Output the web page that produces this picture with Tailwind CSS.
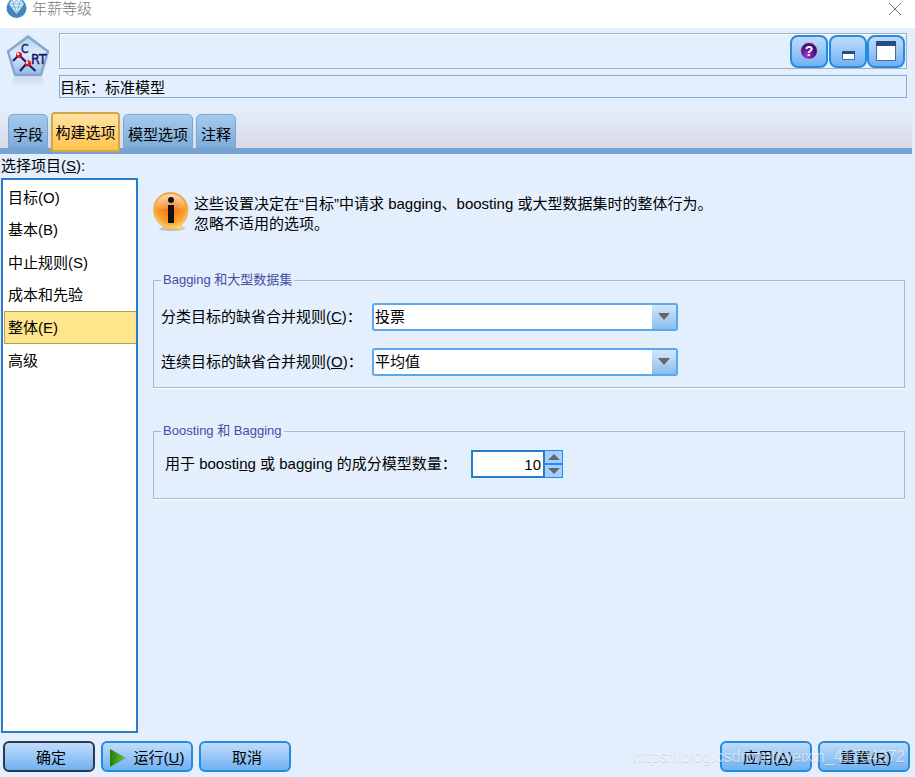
<!DOCTYPE html>
<html lang="zh-CN">
<head>
<meta charset="utf-8">
<title>年薪等级</title>
<script src="https://cdn.jsdelivr.net/npm/@tailwindcss/browser@4"></script>
</head>
<body class="relative flex min-h-screen flex-col overflow-hidden bg-[#e3effc] font-['Liberation_Sans','Noto_Sans_CJK_SC',sans-serif] text-[15px] leading-5 text-black">

<header class="flex h-7 items-start justify-between bg-white pl-[6px] pr-[14px]">
  <div class="flex items-start gap-[5px]">
    <svg class="h-[19px] w-[21px]" viewBox="0 1 21 19" aria-hidden="true">
      <circle cx="10.500" cy="9" r="10" fill="#4384bd"/>
      <path d="M3 5 6 1h9l3 4-7.500 10z" fill="#dff3fc"/>
      <path d="M3 5h15M6 1l4.500 13L15 1M7 5l3.500-4L14 5M5 8h11" fill="none" stroke="#7db4da"/>
    </svg>
    <h1 class="-mt-px text-[15px] font-light text-[#777]">年薪等级</h1>
  </div>
  <button aria-label="关闭" class="mt-[3px]"><svg width="12" height="12" viewBox="0 0 12 12" fill="none" stroke="#777"><path d="M0 0 12 12M12 0 0 12"/></svg></button>
</header>

<section class="flex gap-[9px] pl-[6px] pr-2 pt-[5px]">
  <svg class="h-14 w-[44px] shrink-0" viewBox="0 0 44 56" role="img" aria-label="C&amp;RT">
    <defs>
      <linearGradient id="pent" x2="0" y2="1"><stop stop-color="#b4cfee"/><stop offset=".45" stop-color="#dfecfa"/><stop offset="1" stop-color="#92b9e4"/></linearGradient>
      <linearGradient id="refl" x2="0" y2="1"><stop stop-color="#bccfe4"/><stop offset="1" stop-color="#e3effc"/></linearGradient>
    </defs>
    <path d="M8 44h28l4 10H5z" fill="url(#refl)" opacity=".6"/>
    <path d="M22 3.500 42 18.500 35 42H9L2 18.500z" fill="url(#pent)" stroke="#86a6d2" stroke-width="2.500" stroke-linejoin="round"/>
    <path d="M7 28 13 22 21 30 29.500 38M21 30 14 38" fill="none" stroke="#17176b" stroke-width="2"/>
    <text x="15" y="20" class="font-['DejaVu_Sans_Condensed','DejaVu_Sans',sans-serif] text-[12px]" fill="#17176b" stroke="#17176b" stroke-width=".4">C</text>
    <text x="25" y="31" class="font-['DejaVu_Sans_Condensed','DejaVu_Sans',sans-serif] text-[14px]" fill="#17176b" stroke="#17176b" stroke-width=".4">RT</text>
    <circle cx="13" cy="22" r="3" fill="#d7171d"/><circle cx="12" cy="21" r="1.200" fill="#fff"/>
    <circle cx="22" cy="30.500" r="3" fill="#d7171d"/><circle cx="21" cy="29.500" r="1.200" fill="#fff"/>
  </svg>
  <div class="flex min-w-0 flex-1 flex-col gap-[6px]">
    <div class="flex h-9 items-center justify-end border border-[#a6aeb9] pr-px shadow-[inset_1px_1px_0_#fff]">
      <button aria-label="帮助" class="mr-px flex h-[33px] w-[38px] items-center justify-center rounded-lg border-2 border-[#258be0] bg-linear-to-b from-[#c0dcfb] to-[#6fb1f2]">
        <svg width="18" height="18" viewBox="0 0 18 18"><defs><radialGradient id="purple" cx=".4" cy=".75"><stop stop-color="#a536d8"/><stop offset="1" stop-color="#42127a"/></radialGradient></defs><circle cx="9" cy="9" r="8.500" fill="url(#purple)" stroke="#c7b8e0"/><text x="9" y="14" text-anchor="middle" class="text-[14px] font-bold" fill="#fff">?</text></svg>
      </button>
      <button aria-label="最小化" class="flex h-[33px] w-[38px] items-center justify-center rounded-lg border-2 border-[#258be0] bg-linear-to-b from-[#c0dcfb] to-[#6fb1f2] pt-2">
        <svg width="13" height="9" viewBox="0 0 13 9"><path d="M.5.500h12v8H.5z" fill="#fff" stroke="#426da8"/><path d="M0 0h13v3H0z" fill="#294c80"/></svg>
      </button>
      <button aria-label="最大化" class="flex h-[33px] w-[38px] items-center justify-center rounded-lg border-2 border-[#258be0] bg-linear-to-b from-[#c0dcfb] to-[#6fb1f2]">
        <svg width="20" height="20" viewBox="0 0 20 20"><path d="M.5.500h19v19H.5z" fill="#fff" stroke="#426da8"/><path d="M0 0h20v5H0z" fill="#294c80"/></svg>
      </button>
    </div>
    <div class="h-[23px] border border-[#7eaddb] pt-[2px]">目标：标准模型</div>
  </div>
</section>

<nav class="mr-[3px] mt-[10px] flex h-[46px] items-end gap-[3px] border-b-[6px] border-[#75a4d3] bg-linear-to-b from-[#e3effc] to-[#dad9e5] pl-2" role="tablist">
  <button role="tab" class="h-[34px] w-10 rounded-t-[5px] border border-[#78a7d5] bg-linear-to-b from-[#a5cbec] to-[#7fadd9] pt-2">字段</button>
  <button role="tab" aria-selected="true" class="relative -mb-1 h-10 w-[69px] rounded-t-[4px] border-2 border-[#d2a74c] bg-linear-to-b from-[#ffe3a2] to-[#ffc348] pt-[2px]">构建选项</button>
  <button role="tab" class="h-[34px] w-[70px] rounded-t-[5px] border border-[#78a7d5] bg-linear-to-b from-[#a5cbec] to-[#7fadd9] pt-2">模型选项</button>
  <button role="tab" class="h-[34px] w-10 rounded-t-[5px] border border-[#78a7d5] bg-linear-to-b from-[#a5cbec] to-[#7fadd9] pt-2">注释</button>
</nav>

<main class="flex flex-1 gap-[15px] pl-px pr-[10px]">
  <aside class="flex w-[137px] shrink-0 flex-col">
    <h2 class="h-6 pt-[2px]">选择项目(<u>S</u>):</h2>
    <ul class="flex-1 border-2 border-[#2b7dcc] bg-white pl-px pt-[2px]">
      <li><a href="#" class="flex h-8 items-center px-1">目标(O)</a></li>
      <li><a href="#" class="flex h-8 items-center px-1">基本(B)</a></li>
      <li><a href="#" class="flex h-[33px] items-center px-1">中止规则(S)</a></li>
      <li><a href="#" class="flex h-8 items-center px-1">成本和先验</a></li>
      <li><a href="#" aria-current="true" class="flex h-[33px] items-center border-y border-l border-[#b9a04f] bg-[#ffe58b] px-[3px]">整体(E)</a></li>
      <li><a href="#" class="flex h-[33px] items-center px-1">高级</a></li>
    </ul>
  </aside>

  <div class="min-w-0 flex-1 pt-9">
    <div class="flex h-[82px] gap-[5px]">
      <svg class="mt-[2px] h-10 w-9 shrink-0" viewBox="0 0 36 40" aria-hidden="true">
        <defs>
          <radialGradient id="orange" cx=".5" cy=".4" r=".65"><stop offset=".2" stop-color="#f57a10"/><stop offset=".65" stop-color="#f9a030"/><stop offset="1" stop-color="#ffe680"/></radialGradient>
          <linearGradient id="shine" x2="0" y2="1"><stop stop-color="#fff" stop-opacity=".65"/><stop offset="1" stop-color="#fff" stop-opacity=".1"/></linearGradient>
        </defs>
        <ellipse cx="18" cy="37" rx="12" ry="2" fill="#9a8d78" opacity=".45"/>
        <path d="M17.500.500C8 .500.500 8 .500 17.500S8 37 19 37c5 0 9 .500 13-.500-2-.500-4-2-4-3.500 4-3 7-8 7-15.500C35 8 27 .500 17.500.500z" fill="url(#orange)" stroke="#e2a04c" stroke-width=".6"/>
        <path d="M17.500 2C9 2 3 8 3 15q14 5 29 0C32 8 26 2 17.500 2z" fill="url(#shine)"/>
        <circle cx="18" cy="8" r="3" fill="#111"/><path d="M15 13h6v18h-6z" fill="#111"/>
      </svg>
      <p class="pt-1">这些设置决定在“目标”中请求 bagging、boosting 或大型数据集时的整体行为。<br>忽略不适用的选项。</p>
    </div>

    <fieldset class="h-[116px] border border-[#aeb7c3] px-[7px] shadow-[0_1px_0_#fff]">
      <legend class="px-[2px] text-[13px] leading-4 text-[#444ea4]">Bagging 和大型数据集</legend>
      <div class="mt-[15px] flex h-7 items-center">
        <label for="cat" class="w-[211px]">分类目标的缺省合并规则(<u>C</u>)：</label>
        <div class="relative w-[306px]">
          <select id="cat" class="block h-7 w-full appearance-none rounded-[3px] border-2 border-[#59a8f0] bg-white pl-px"><option>投票</option></select>
          <span class="pointer-events-none absolute inset-y-[2px] right-[2px] flex w-6 justify-center bg-linear-to-b from-[#d3e7fb] to-[#8abcf0] pt-2"><svg width="12" height="7"><path d="M0 0h12L6 7z" fill="#666"/></svg></span>
        </div>
      </div>
      <div class="mt-[17px] flex h-7 items-center">
        <label for="con" class="w-[211px]">连续目标的缺省合并规则(<u>O</u>)：</label>
        <div class="relative w-[306px]">
          <select id="con" class="block h-7 w-full appearance-none rounded-[3px] border-2 border-[#59a8f0] bg-white pl-px"><option>平均值</option></select>
          <span class="pointer-events-none absolute inset-y-[2px] right-[2px] flex w-6 justify-center bg-linear-to-b from-[#d3e7fb] to-[#8abcf0] pt-2"><svg width="12" height="7"><path d="M0 0h12L6 7z" fill="#666"/></svg></span>
        </div>
      </div>
    </fieldset>

    <fieldset class="mt-[35px] h-[76px] border border-[#aeb7c3] px-[7px] shadow-[0_1px_0_#fff]">
      <legend class="px-[2px] text-[13px] leading-4 text-[#444ea4]">Boosting 和 Bagging</legend>
      <div class="mt-[11px] flex h-7 items-center pl-1">
        <label for="num" class="w-[306px]">用于 boosti<u>n</u>g 或 bagging 的成分模型数量：</label>
        <input id="num" type="text" inputmode="numeric" value="10" class="h-7 w-[74px] border-2 border-[#2b7dcc] bg-white pr-[2px] text-right">
        <div class="flex h-7 w-[18px] flex-col border border-l-0 border-[#168fff] bg-[#a8cffb]">
          <button aria-label="增加" class="flex flex-1 items-center justify-center border-b border-[#168fff]"><svg width="12" height="6"><path d="M0 6h12L6 0z" fill="#666"/></svg></button>
          <button aria-label="减少" class="flex flex-1 items-center justify-center border-t border-[#168fff]"><svg width="12" height="6"><path d="M0 0h12L6 6z" fill="#666"/></svg></button>
        </div>
      </div>
    </fieldset>
  </div>
</main>

<footer class="flex h-11 items-start gap-[6px] pl-[3px] pr-[5px] pt-2">
  <button class="h-[31px] w-[92px] rounded-md border-2 border-[#2a3850] bg-linear-to-b from-[#c0dcfb] to-[#6fb1f2] pl-1 pt-[2px]">确定</button>
  <button class="flex h-[31px] w-[92px] items-center justify-center gap-2 rounded-md border-2 border-[#258be0] bg-linear-to-b from-[#c0dcfb] to-[#6fb1f2] pt-[2px]"><svg width="16" height="18" viewBox="0 0 16 18"><defs><linearGradient id="play"><stop stop-color="#228000"/><stop offset="1" stop-color="#76b85c"/></linearGradient></defs><path d="M0 0 16 9 0 18z" fill="url(#play)"/></svg><span>运行(<u>U</u>)</span></button>
  <button class="h-[31px] w-[92px] rounded-md border-2 border-[#258be0] bg-linear-to-b from-[#c0dcfb] to-[#6fb1f2] pl-1 pt-[2px]">取消</button>
  <button class="ml-auto h-[31px] w-[92px] rounded-md border-2 border-[#258be0] bg-linear-to-b from-[#c0dcfb] to-[#6fb1f2] pl-1 pt-[2px]">应用(<u>A</u>)</button>
  <button class="h-[31px] w-[92px] rounded-md border-2 border-[#258be0] bg-linear-to-b from-[#c0dcfb] to-[#6fb1f2] pl-1 pt-[2px]">重置(<u>R</u>)</button>
</footer>
<div class="pointer-events-none absolute bottom-2 right-[10px] text-base text-white/60 text-shadow-2xs">https://blog.csdn.net/weixin_41704372</div>
</body>
</html>
